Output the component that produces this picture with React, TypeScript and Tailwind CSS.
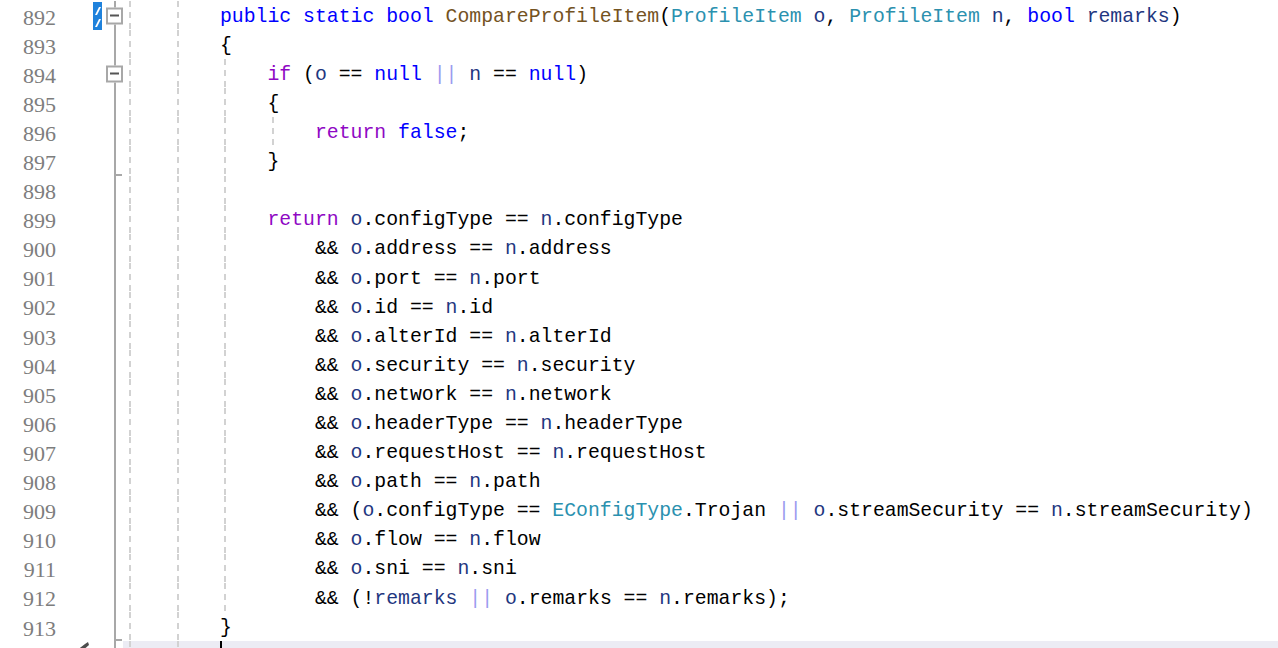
import React from "react";

type Tok = [string, string?];

const C: Record<string, string> = {
  d: "text-black",
  k: "text-[#0000ff]",
  c: "text-[#8f08c4]",
  t: "text-[#2b91af]",
  m: "text-[#74531f]",
  p: "text-[#1f377f]",
  o: "text-[#9b9bef]",
};

const CH = 11.88;
const pad = (n: number): Tok => [" ".repeat(n)];

const prop = (name: string): Tok[] => [
  pad(16),
  ["&& "],
  ["o", "p"],
  ["." + name + " == "],
  ["n", "p"],
  ["." + name],
];

const lines: Tok[][] = [
  [
    pad(8),
    ["public", "k"],
    [" "],
    ["static", "k"],
    [" "],
    ["bool", "k"],
    [" "],
    ["CompareProfileItem", "m"],
    ["("],
    ["ProfileItem", "t"],
    [" "],
    ["o", "p"],
    [", "],
    ["ProfileItem", "t"],
    [" "],
    ["n", "p"],
    [", "],
    ["bool", "k"],
    [" "],
    ["remarks", "p"],
    [")"],
  ],
  [pad(8), ["{"]],
  [
    pad(12),
    ["if", "c"],
    [" ("],
    ["o", "p"],
    [" == "],
    ["null", "k"],
    [" "],
    ["||", "o"],
    [" "],
    ["n", "p"],
    [" == "],
    ["null", "k"],
    [")"],
  ],
  [pad(12), ["{"]],
  [pad(16), ["return", "c"], [" "], ["false", "k"], [";"]],
  [pad(12), ["}"]],
  [],
  [
    pad(12),
    ["return", "c"],
    [" "],
    ["o", "p"],
    [".configType == "],
    ["n", "p"],
    [".configType"],
  ],
  prop("address"),
  prop("port"),
  prop("id"),
  prop("alterId"),
  prop("security"),
  prop("network"),
  prop("headerType"),
  prop("requestHost"),
  prop("path"),
  [
    pad(16),
    ["&& ("],
    ["o", "p"],
    [".configType == "],
    ["EConfigType", "t"],
    [".Trojan "],
    ["||", "o"],
    [" "],
    ["o", "p"],
    [".streamSecurity == "],
    ["n", "p"],
    [".streamSecurity)"],
  ],
  prop("flow"),
  prop("sni"),
  [
    pad(16),
    ["&& (!"],
    ["remarks", "p"],
    [" "],
    ["||", "o"],
    [" "],
    ["o", "p"],
    [".remarks == "],
    ["n", "p"],
    [".remarks);"],
  ],
  [pad(8), ["}"]],
];

function guidesFor(i: number) {
  const g = [0, 4];
  if (i >= 2 && i <= 20) g.push(8);
  if (i === 4) g.push(12);
  return g;
}

function Guide({ col }: { col: number }) {
  return (
    <span
      className="absolute top-0 bottom-0 w-[2px] bg-[repeating-linear-gradient(to_bottom,#d2d2d2_0px,#d2d2d2_6px,transparent_6px,transparent_11px)]"
      style={{ left: 4 + col * CH }}
    />
  );
}

function ChangeMarker() {
  return (
    <svg width="9" height="28" viewBox="0 0 9 28">
      <rect width="9" height="28" fill="#1f82dc" />
      <polygon points="2,13 6,5 8,5 4,13" fill="#fff" />
      <polygon points="2,25 6,17 8,17 4,25" fill="#fff" />
    </svg>
  );
}

function FoldBox() {
  return (
    <span className="absolute left-[4px] top-1/2 -translate-y-1/2 w-[17px] h-[17px] border-2 border-[#a8a8a8] bg-white flex items-center justify-center">
      <span className="w-[9px] h-[2px] bg-[#555]" />
    </span>
  );
}

export default function App() {
  return (
    <div className="h-[648px] w-[1278px] overflow-hidden bg-white pt-[1px]">
      {lines.map((toks, i) => {
        const num = 892 + i;
        return (
          <div key={i} className="flex h-[29.1px] items-center">
            <div className="w-[56px] pt-[4px] text-right text-[22px] leading-none text-[#7d7d7d] font-['Liberation_Serif',serif]">
              {num}
            </div>
            <div className="w-[37px]" />
            <div className="w-[9px] h-full flex items-center pt-[1px]">
              {i === 0 && <ChangeMarker />}
            </div>
            <div className="relative w-[23px] h-full">
              <span className="absolute left-[12px] top-0 bottom-0 w-[2px] bg-[#a8a8a8]" />
              {(i === 0 || i === 2) && <FoldBox />}
              {(i === 5 || i === 21) && (
                <span className="absolute left-[12px] bottom-0 w-[8px] h-[2px] bg-[#a8a8a8]" />
              )}
            </div>
            <div className="relative flex-1 h-full flex items-center pt-[4px]">
              {guidesFor(i).map((c) => (
                <Guide key={c} col={c} />
              ))}
              <span className="relative whitespace-pre text-[19.8px] font-['Liberation_Mono',monospace]">
                {toks.map(([t, k], j) => (
                  <span key={j} className={C[k ?? "d"]}>
                    {t}
                  </span>
                ))}
              </span>
            </div>
          </div>
        );
      })}
      <div className="flex h-[29.1px]">
        <div className="w-[56px]" />
        <div className="relative w-[37px] h-full">
          <svg
            className="absolute left-[20px] top-[1px]"
            width="14"
            height="9"
            viewBox="0 0 14 9"
          >
            <polygon points="0,9 9,2 12,0 13,3 6,9" fill="#4d4d4d" />
          </svg>
        </div>
        <div className="w-[9px]" />
        <div className="relative w-[23px] h-full">
          <span className="absolute left-[12px] top-0 bottom-0 w-[2px] bg-[#a8a8a8]" />
          <span className="absolute left-[21px] right-0 top-0 bottom-0 bg-[#ececf4]" />
        </div>
        <div className="relative flex-1 h-full bg-[#ececf4]">
          <Guide col={0} />
          <Guide col={4} />
          <span className="absolute left-[95px] top-0 bottom-0 w-[2px] bg-black" />
        </div>
      </div>
    </div>
  );
}
